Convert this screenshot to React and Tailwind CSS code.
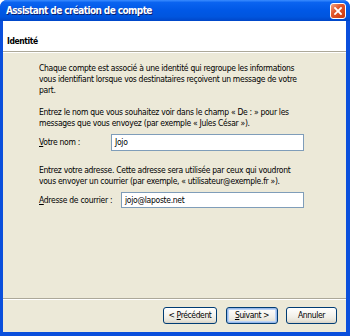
export default function App() {
  const body = { fontFamily: '"DejaVu Sans Condensed", "DejaVu Sans", sans-serif' };
  const btn = "h-[17px] rounded-[3px] border border-[#003C74] bg-[linear-gradient(to_bottom,#FFFFFF,#F1EFE8_60%,#E6E3D8_85%,#D6D0C5)] text-black leading-none whitespace-nowrap";
  return (
    <div className="w-[350px] h-[336px] bg-[#0A4FDC] rounded-t-[7px] flex flex-col overflow-hidden" style={body}>
      <div className="h-[21px] shrink-0 flex items-center justify-between pl-[6px] pr-[4px] bg-[linear-gradient(to_bottom,#3A8CFF_0%,#0A63F0_12%,#0058E6_50%,#0055DE_80%,#0046C8_100%)]">
        <span className="text-white font-bold text-[10px] tracking-[-0.6px] [text-shadow:1px_1px_0_#0A1E6E] leading-none">Assistant de création de compte</span>
        <div className="w-[16px] h-[16px] rounded-[3px] border border-white bg-[linear-gradient(135deg,#F3A584_0%,#E2572B_40%,#C8380C_100%)] flex items-center justify-center">
          <svg width="8" height="8" viewBox="0 0 8 8">
            <path d="M1 1 L7 7 M7 1 L1 7" stroke="white" strokeWidth="1.8" strokeLinecap="square" />
          </svg>
        </div>
      </div>
      <div className="flex-1 flex flex-col ml-[3px] mr-[4px] mb-[4px] bg-[#ECE9D8]">
        <div className="h-[31px] shrink-0 bg-white pl-[4px] pt-[6px] border-b border-[#ACA899]">
          <span className="font-bold text-[8.5px] tracking-[-0.4px] text-black">Identité</span>
        </div>
        <div className="h-px bg-white shrink-0" />
        <div className="flex-1 pl-[36px] pt-[10px] text-[8.5px] tracking-[-0.3px] leading-[11px] text-black">
          <p className="w-[262px]">Chaque compte est associé à une identité qui regroupe les informations vous identifiant lorsque vos destinataires reçoivent un message de votre part.</p>
          <p className="w-[262px] mt-[11px]">Entrez le nom que vous souhaitez voir dans le champ « De : » pour les messages que vous envoyez (par exemple « Jules César »).</p>
          <div className="flex items-center mt-[5px]">
            <span className="w-[72px]"><u>V</u>otre nom :</span>
            <div className="w-[193px] h-[17px] bg-white border border-[#7F9DB9] pl-[3px] flex items-center">Jojo</div>
          </div>
          <p className="w-[262px] mt-[14px]">Entrez votre adresse. Cette adresse sera utilisée par ceux qui voudront vous envoyer un courrier (par exemple, « utilisateur@exemple.fr »).</p>
          <div className="flex items-center mt-[5px]">
            <span className="w-[82px] whitespace-nowrap"><u>A</u>dresse de courrier :</span>
            <div className="w-[183px] h-[16px] bg-white border border-[#7F9DB9] pl-[3px] flex items-center">jojo@laposte.net</div>
          </div>
        </div>
        <div className="h-px bg-[#ACA899] shrink-0" />
        <div className="h-px bg-white shrink-0" />
        <div className="h-[32px] shrink-0 flex items-start justify-end pt-[7px] pr-[9px] text-[8.5px] tracking-[-0.4px]">
          <button className={`w-[54px] ${btn}`}>&lt; <u>P</u>récédent</button>
          <button className={`w-[52px] ml-[9px] shadow-[inset_0_0_0_1px_#98B8EA,inset_0_0_0_2px_#BCD4F6] ${btn}`}><u>S</u>uivant &gt;</button>
          <button className={`w-[51px] ml-[8px] ${btn}`}>Annuler</button>
        </div>
      </div>
    </div>
  );
}
